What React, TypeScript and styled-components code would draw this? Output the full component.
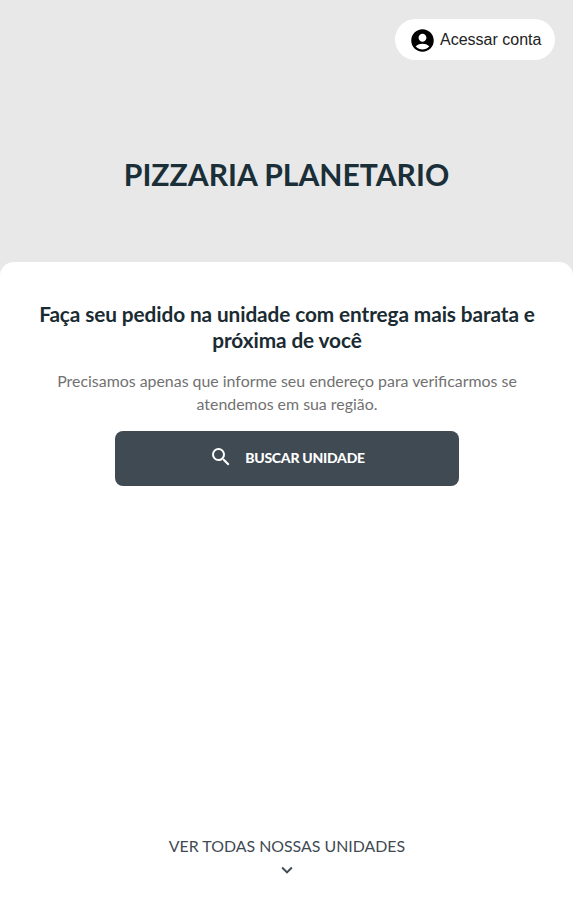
import React from "react";
import styled, { createGlobalStyle } from "styled-components";
import { MdAccountCircle, MdSearch, MdKeyboardArrowDown } from "react-icons/md";

const GlobalStyle = createGlobalStyle`
  * { box-sizing: border-box; }
  body { margin: 0; background: #e8e8e8; }
`;

const Page = styled.div`
  display: flex;
  flex-direction: column;
  height: 900px;
  background: #e8e8e8;
  font-family: Lato, sans-serif;
  text-align: center;
`;

const Header = styled.header`
  display: flex;
  flex-direction: column;
  height: 262px;
  padding: 19px 18px 0;
`;

const AccountButton = styled.button`
  display: flex;
  align-items: center;
  align-self: flex-end;
  gap: 4px;
  width: 160px;
  height: 41px;
  padding: 1px 0 0 14px;
  border: 0;
  border-radius: 21px;
  background: #fff;
  color: #000;
  font: 16px "Liberation Sans", Arial, sans-serif;
  white-space: nowrap;

  span { color: #222; }
`;

const Brand = styled.h1`
  margin: 95px 0 0;
  color: #1b2f38;
  font-size: 30.1px;
  font-weight: 700;
  line-height: 38px;
`;

const Panel = styled.main`
  display: flex;
  flex: 1;
  flex-direction: column;
  align-items: center;
  padding: 39px 0 0 1px;
  border-radius: 14px 14px 0 0;
  background: #fff;
`;

const Heading = styled.h2`
  margin: 0;
  color: #1b2b32;
  font-size: 20.8px;
  font-weight: 700;
  letter-spacing: -0.1px;
  line-height: 26px;
`;

const Description = styled.p`
  margin: 16px 0 0;
  color: #717171;
  font-size: 15.9px;
  line-height: 23px;
`;

const SearchButton = styled.button`
  display: flex;
  align-items: center;
  justify-content: center;
  gap: 12px;
  width: 344px;
  height: 55px;
  margin-top: 16px;
  padding: 0 0 3px;
  border: 0;
  border-radius: 8px;
  background: #3f4a53;
  color: #fff;
  font: 900 14px Lato, sans-serif;
  letter-spacing: -0.26px;
`;

const UnitsLink = styled.button`
  display: flex;
  flex-direction: column;
  align-items: center;
  margin-top: auto;
  padding: 0 0 19px;
  border: 0;
  background: transparent;
  color: #3f4a53;
  font: 15.9px/24px Lato, sans-serif;

  span { margin-bottom: 1px; }
`;

export default function App() {
  return (
    <Page>
      <GlobalStyle />
      <Header>
        <AccountButton><MdAccountCircle size={27} /><span>Acessar conta</span></AccountButton>
        <Brand>PIZZARIA PLANETARIO</Brand>
      </Header>
      <Panel>
        <Heading>Faça seu pedido na unidade com entrega mais barata e<br />próxima de você</Heading>
        <Description>Precisamos apenas que informe seu endereço para verificarmos se<br />atendemos em sua região.</Description>
        <SearchButton><MdSearch size={24} /><span>BUSCAR UNIDADE</span></SearchButton>
        <UnitsLink><span>VER TODAS NOSSAS UNIDADES</span><MdKeyboardArrowDown size={22} /></UnitsLink>
      </Panel>
    </Page>
  );
}
